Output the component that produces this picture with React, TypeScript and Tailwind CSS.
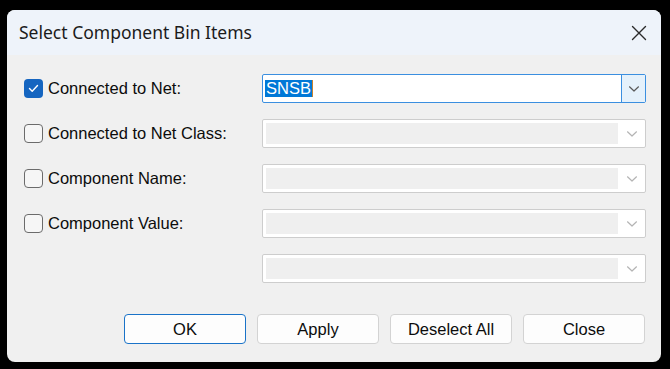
import React from "react";

const Chevron = ({ color }: { color: string }) => (
  <svg width="12" height="8" viewBox="0 0 12 8" fill="none">
    <path d="M1.5 1.8 L6 6 L10.5 1.8" stroke={color} strokeWidth="1.2" strokeLinecap="round" strokeLinejoin="round" />
  </svg>
);

const CheckBox = ({ checked }: { checked?: boolean }) =>
  checked ? (
    <div className="w-[19px] h-[19px] rounded-[4px] bg-[#1565c0] flex items-center justify-center shrink-0">
      <svg width="11" height="9" viewBox="0 0 11 9" fill="none">
        <path d="M1.5 4.6 L4.2 7.2 L9.5 1.6" stroke="white" strokeWidth="1.4" strokeLinecap="round" strokeLinejoin="round" />
      </svg>
    </div>
  ) : (
    <div className="w-[19px] h-[19px] rounded-[4px] border border-[#6b6b6b] bg-[#f6f6f6] shrink-0" />
  );

const DisabledCombo = () => (
  <div className="w-[384px] h-[29px] border border-[#cdcdcd] rounded-[2px] bg-white flex p-[3px] pr-0">
    <div className="flex-1 bg-[#efefef]" />
    <div className="w-[27px] flex items-center justify-center">
      <Chevron color="#b4b4b4" />
    </div>
  </div>
);

const rows = [
  { label: "Connected to Net:", checked: true },
  { label: "Connected to Net Class:" },
  { label: "Component Name:" },
  { label: "Component Value:" },
];

const buttons = ["OK", "Apply", "Deselect All", "Close"];

export default function App() {
  return (
    <div className="w-[670px] h-[369px] bg-black pt-[10px] pl-[7px]" style={{ fontFamily: '"Liberation Sans", Arial, sans-serif' }}>
      <div className="w-[654px] h-[352px] rounded-[8px] bg-[#f0f0f0] overflow-hidden flex flex-col">
        <div className="h-[45px] bg-[#eef3fa] flex items-center justify-between pl-[12px] pr-[14px]">
          <span className="text-[17.5px] text-[#1b1b1b]" style={{ fontFamily: '"Noto Sans", "Open Sans", sans-serif' }}>
            Select Component Bin Items
          </span>
          <svg width="16" height="16" viewBox="0 0 16 16" fill="none">
            <path d="M1.5 1.5 L14.5 14.5 M14.5 1.5 L1.5 14.5" stroke="#2a2a2a" strokeWidth="1.4" strokeLinecap="round" />
          </svg>
        </div>
        <div className="flex flex-col gap-[16px] pt-[19px] pl-[17px]">
          {rows.map((r, i) => (
            <div key={r.label} className="flex items-center h-[29px]">
              <div className="w-[238px] flex items-center gap-[5px]">
                <CheckBox checked={r.checked} />
                <span className="text-[16.5px] text-[#0c0c0c]">{r.label}</span>
              </div>
              {i === 0 ? (
                <div className="w-[384px] h-[29px] border border-[#3b8fe0] rounded-[2px] bg-white flex">
                  <div className="flex-1 flex items-center pl-[2px]">
                    <span className="bg-[#0078d7] text-white text-[16.5px] leading-[17px] px-[1px]">SNSB</span>
                    <span className="w-px h-[17px] bg-[#c8822e]" />
                  </div>
                  <div className="w-[24px] border-l border-[#3b8fe0] bg-[#e5f1fb] flex items-center justify-center">
                    <Chevron color="#5a5a5a" />
                  </div>
                </div>
              ) : (
                <DisabledCombo />
              )}
            </div>
          ))}
          <div className="flex items-center h-[29px]">
            <div className="w-[238px]" />
            <DisabledCombo />
          </div>
        </div>
        <div className="flex justify-end gap-[11px] pr-[16px] pt-[31px]">
          {buttons.map((b, i) => (
            <div
              key={b}
              className={`w-[122px] h-[30px] rounded-[4px] bg-[#fdfdfd] flex items-center justify-center text-[16.5px] text-[#0c0c0c] border ${
                i === 0 ? "border-[#1a73c8]" : "border-[#d3d3d3]"
              }`}
            >
              {b}
            </div>
          ))}
        </div>
      </div>
    </div>
  );
}
